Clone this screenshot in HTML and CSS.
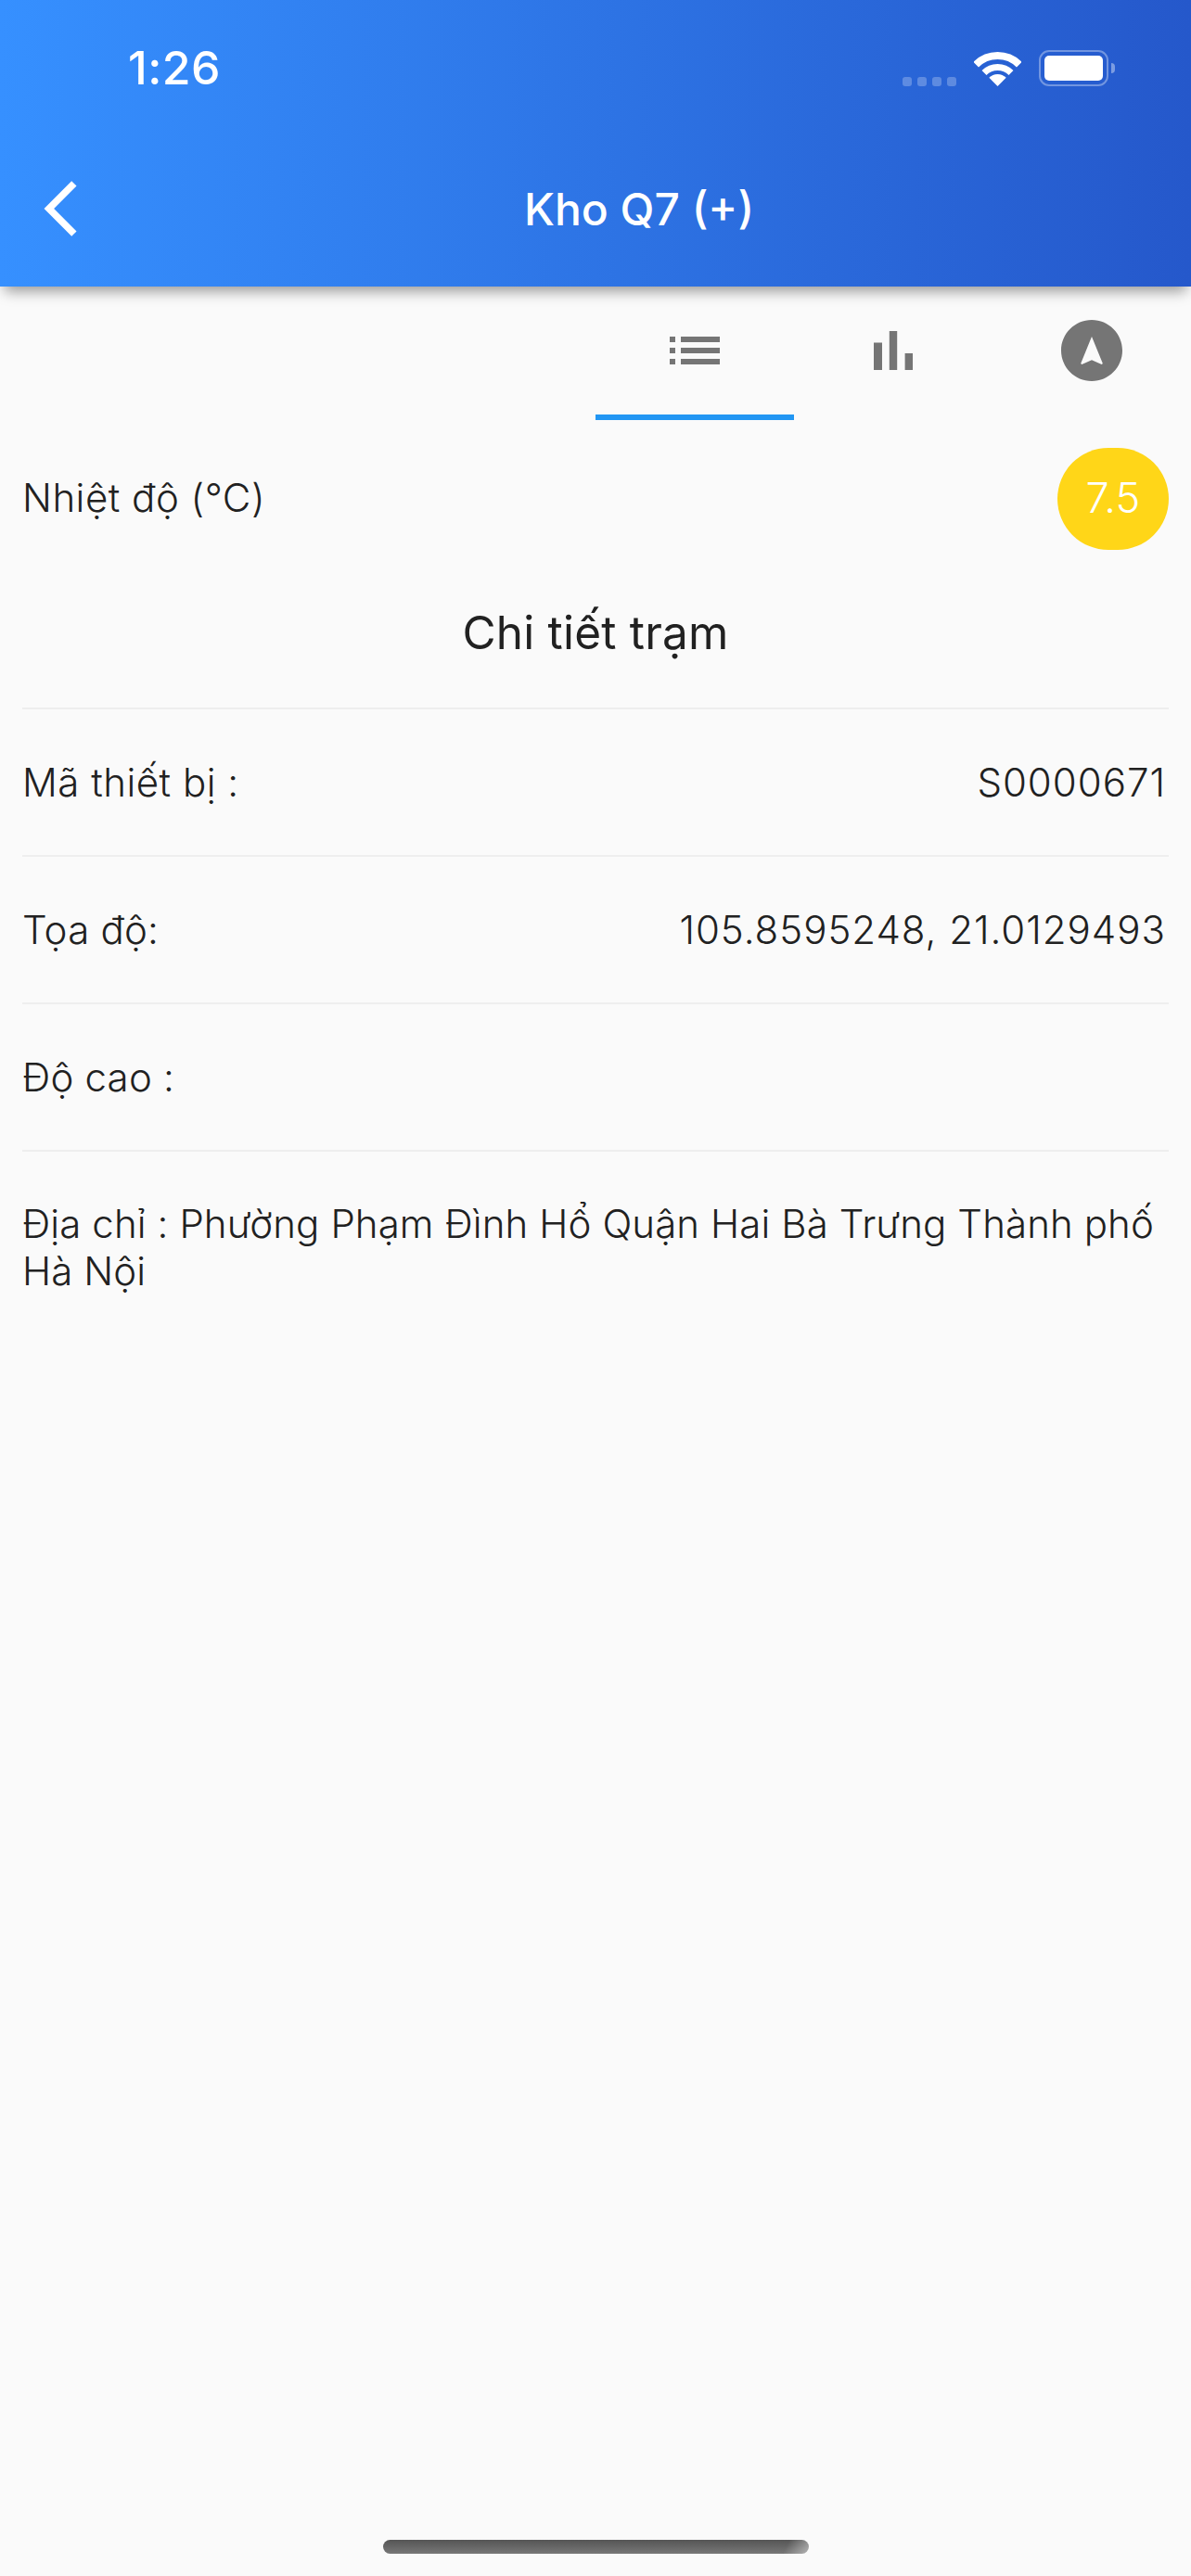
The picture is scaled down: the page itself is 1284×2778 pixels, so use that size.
FILE: index.html
```html
<!DOCTYPE html>
<html lang="vi">
<head>
  <meta charset="UTF-8">
  <title>Kho Q7 (+)</title>
  <link rel="stylesheet" href="styles.css">
</head>
<body>

<div class="page">
  <header class="header">
    <div class="status-bar">
      <span class="time">1:26</span>
      <div class="status-icons">
        <div class="signal"><i></i><i></i><i></i><i></i></div>
        <svg class="wifi" width="51" height="37" viewBox="0 0 51 37">
          <path d="M2.2 13.7A33 33 0 0 1 48.8 13.7" fill="none" stroke="#fff" stroke-width="8"/>
          <path d="M11 22.5A20.5 20.5 0 0 1 40 22.5" fill="none" stroke="#fff" stroke-width="7"/>
          <path d="M25.5 37L16.3 27.8A13 13 0 0 1 34.7 27.8Z" fill="#fff"/>
        </svg>
        <div class="battery"><div class="battery-level"></div></div>
        <div class="battery-cap"></div>
      </div>
    </div>
    <div class="app-bar">
      <svg class="back" width="72" height="72" viewBox="0 0 24 24">
        <path d="M17.51 3.87L15.73 2.1 5.84 12l9.9 9.9 1.77-1.77L9.38 12l8.13-8.13z" fill="#fff"/>
      </svg>
      <div class="title">Kho Q7 (+)</div>
    </div>
  </header>

  <nav class="tabs">
    <div class="tab active">
      <svg width="72" height="72" viewBox="0 0 24 24"><path d="M3 13h2v-2H3v2zm0 4h2v-2H3v2zm0-8h2V7H3v2zm4 4h14v-2H7v2zm0 4h14v-2H7v2zM7 7v2h14V7H7z"/></svg>
    </div>
    <div class="tab">
      <svg width="72" height="72" viewBox="0 0 24 24"><path d="M5 9.2h3V19H5zM10.6 5h2.8v14h-2.8zm5.6 8H19v6h-2.8z"/></svg>
    </div>
    <div class="tab">
      <svg width="72" height="72" viewBox="0 0 24 24"><path fill-rule="evenodd" d="M12 1C5.93 1 1 5.93 1 12s4.93 11 11 11 11-4.93 11-11S18.07 1 12 1zm3.57 16L12 15.42 8.43 17l-.37-.37L12 7l3.95 9.63-.38.37z"/></svg>
    </div>
  </nav>

  <main class="content">
    <div class="temp-row">
      <span class="temp-label">Nhiệt độ (°C)</span>
      <div class="temp-badge">7.5</div>
    </div>
    <h2 class="section-title">Chi tiết trạm</h2>
    <div class="row"><span class="label">Mã thiết bị :</span><span class="value">S0000671</span></div>
    <div class="row"><span>Tọa độ:</span><span class="value">105.8595248, 21.0129493</span></div>
    <div class="row"><span>Độ cao :</span></div>
    <div class="row address">Địa chỉ : Phường Phạm Đình Hổ Quận Hai Bà Trưng Thành phố Hà Nội</div>
  </main>

  <div class="home-indicator"></div>
</div>

</body>
</html>
```

FILE: styles.css
```css
body {
  margin: 0;
  font-family: Inter, "Noto Sans", sans-serif;
  background: #fafafa;
  color: #212121;
}
.page {
  display: flex;
  flex-direction: column;
  height: 2778px;
  overflow: hidden;
}
.header {
  height: 309px;
  background: linear-gradient(90deg, #3690ff, #2558cb);
  box-shadow: 0 10px 14px -5px rgba(0, 0, 0, 0.4);
  color: white;
}
.status-bar {
  display: flex;
  justify-content: space-between;
  align-items: center;
  height: 146px;
  padding: 0 82px 0 138px;
}
.time {
  font-size: 50px;
  font-weight: 500;
  letter-spacing: 0.4px;
}
.status-icons {
  display: flex;
  align-items: flex-end;
}
.signal {
  display: flex;
  gap: 6px;
  margin-right: 19px;
}
.signal i {
  width: 10px;
  height: 10px;
  border-radius: 3px;
  background: rgba(255, 255, 255, 0.25);
}
.wifi {
  margin-right: 19px;
}
.battery {
  box-sizing: border-box;
  width: 75px;
  height: 39px;
  padding: 4px;
  border: 2px solid rgba(255, 255, 255, 0.35);
  border-radius: 11px;
}
.battery-level {
  height: 100%;
  background: white;
  border-radius: 5px;
}
.battery-cap {
  align-self: center;
  width: 4px;
  height: 11px;
  margin-left: 3px;
  background: rgba(255, 255, 255, 0.4);
  border-radius: 0 6px 6px 0;
}
.app-bar {
  display: flex;
  align-items: center;
  height: 158px;
  padding: 0 8px 0 30px;
}
.back {
  flex-shrink: 0;
}
.title {
  flex: 1;
  text-align: center;
  font-size: 48px;
  font-weight: 500;
}
.tabs {
  display: grid;
  grid-template-columns: repeat(3, 214px);
  margin-left: 642px;
}
.tab {
  box-sizing: border-box;
  height: 144px;
  padding-top: 33px;
  display: flex;
  justify-content: center;
  align-items: flex-start;
  border-bottom: 6px solid transparent;
}
.tab svg {
  fill: #757575;
}
.tab.active {
  border-bottom-color: #2196f3;
}
.content {
  flex: 1;
  padding: 30px 24px 0;
  font-size: 42px;
  font-weight: 350;
  letter-spacing: 0.2px;
}
.temp-row {
  display: flex;
  justify-content: space-between;
  align-items: center;
}
.temp-label {
  padding-bottom: 3px;
  letter-spacing: 0.5px;
}
.temp-badge {
  box-sizing: border-box;
  width: 120px;
  height: 110px;
  padding-bottom: 3px;
  border-radius: 60px;
  background: #ffd618;
  color: white;
  font-size: 45px;
  font-weight: 300;
  display: flex;
  justify-content: center;
  align-items: center;
}
.section-title {
  margin: 0;
  height: 172px;
  box-sizing: border-box;
  padding-top: 61px;
  text-align: center;
  font-size: 49.5px;
  font-weight: 400;
  line-height: 56px;
  border-bottom: 2px solid #eeeeee;
}
.row {
  display: flex;
  justify-content: space-between;
  align-items: center;
  box-sizing: border-box;
  height: 159px;
  padding-right: 3px;
  border-bottom: 2px solid #eeeeee;
}
.label {
  letter-spacing: 0.5px;
}
.value {
  letter-spacing: 1px;
}
.row.address {
  display: block;
  height: auto;
  padding: 52px 0 0;
  border-bottom: none;
  line-height: 51px;
  letter-spacing: 0.1px;
}
.home-indicator {
  flex-shrink: 0;
  width: 459px;
  height: 15px;
  margin: 0 auto 24px;
  border-radius: 8px;
  background: linear-gradient(115deg, transparent 94%, rgba(255, 255, 255, 0.45)), linear-gradient(180deg, #555, #777);
}
```
